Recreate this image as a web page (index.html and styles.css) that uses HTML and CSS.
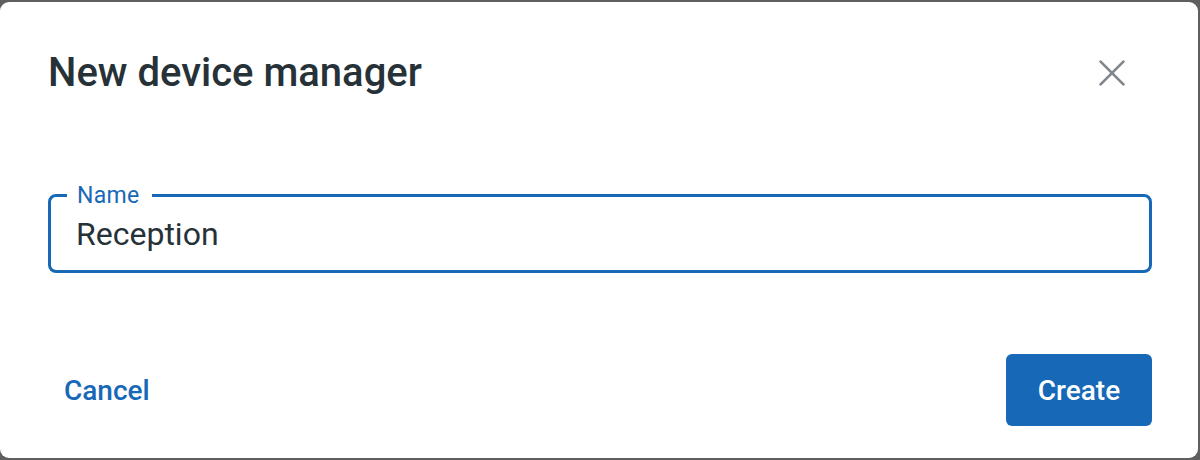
FILE: index.html
```html
<!DOCTYPE html>
<html lang="en">
<head>
<meta charset="utf-8">
<title>New device manager</title>
<link rel="stylesheet" href="styles.css">
</head>
<body>
<div class="dialog">
  <div class="header">
    <h1 class="title">New device manager</h1>
    <button class="close" aria-label="Close">
      <svg width="26" height="26" viewBox="0 0 26 26"><path d="M1.6 1.6L24.4 24.4M24.4 1.6L1.6 24.4" stroke="#80868b" stroke-width="2.7" stroke-linecap="round" fill="none"/></svg>
    </button>
  </div>
  <div class="body">
    <div class="field">
      <span class="label">Name</span>
      <div class="value">Reception</div>
    </div>
  </div>
  <div class="footer">
    <button class="btn-text">Cancel</button>
    <button class="btn-primary">Create</button>
  </div>
</div>
</body>
</html>
```
FILE: styles.css
```css
html, body {
  margin: 0;
  padding: 0;
}
body {
  background: #5f5f5f;
  font-family: Roboto, "Liberation Sans", sans-serif;
  padding: 2px 2px 2px 0;
  box-sizing: border-box;
  height: 460px;
}
.dialog {
  background: #fff;
  border-radius: 9px;
  height: 456px;
  box-sizing: border-box;
  padding: 0 46px 0 48px;
  display: flex;
  flex-direction: column;
}
.header {
  display: flex;
  align-items: center;
  justify-content: space-between;
  height: 142px;
}
.title {
  margin: 0;
  font-size: 40px;
  font-weight: 500;
  color: #263238;
  line-height: 1;
}
.close {
  border: 0;
  background: none;
  padding: 0;
  margin-right: 27px;
  width: 26px;
  height: 26px;
  display: flex;
  cursor: pointer;
}
.body {
  padding-top: 50px;
}
.field {
  position: relative;
  border: 3px solid #1769b7;
  border-radius: 8px;
  height: 79px;
  box-sizing: border-box;
  padding: 0 25px;
  display: flex;
  align-items: center;
}
.label {
  position: absolute;
  top: -13px;
  left: 16px;
  background: #fff;
  color: #1769b7;
  font-size: 23px;
  letter-spacing: 0.3px;
  padding: 0 12px 0 10px;
  line-height: 1;
}
.value {
  font-size: 32px;
  color: #263238;
  line-height: 1;
}
.footer {
  display: flex;
  justify-content: space-between;
  align-items: center;
  margin-top: 81px;
}
.btn-text {
  border: 0;
  background: none;
  color: #1769b7;
  font-family: inherit;
  font-size: 28px;
  font-weight: 500;
  padding: 0 0 0 16px;
  cursor: pointer;
}
.btn-primary {
  border: 0;
  background: #1769b7;
  color: #fff;
  font-family: inherit;
  font-size: 28px;
  font-weight: 500;
  border-radius: 6px;
  width: 146px;
  height: 72px;
  cursor: pointer;
}
```
